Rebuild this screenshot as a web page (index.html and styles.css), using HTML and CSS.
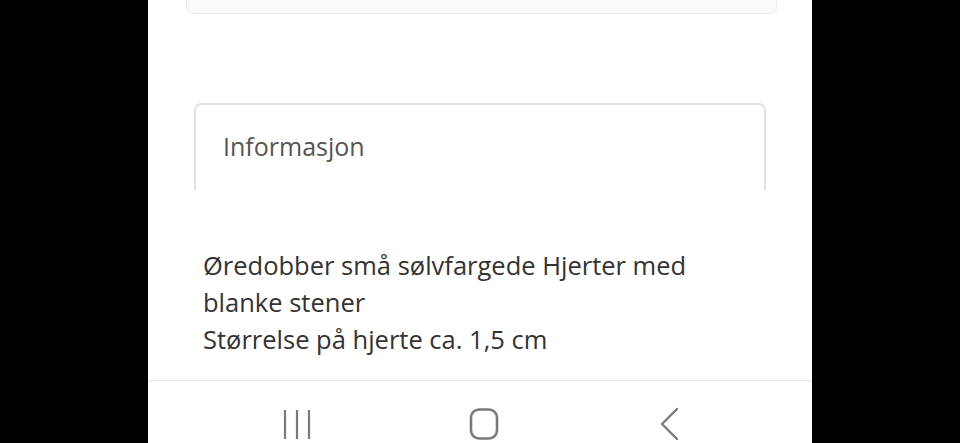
FILE: index.html
```html
<!DOCTYPE html>
<html lang="no">

<head>
    <meta charset="UTF-8">
    <title>Øredobber små sølvfargede Hjerter</title>
    <link rel="stylesheet" href="styles.css">
</head>

<body>
    <div class="phone">
        <div class="prevCard"></div>
        <div class="infoBox">
            <h2 class="infoTitle">Informasjon</h2>
        </div>
        <p class="description">Øredobber små sølvfargede Hjerter med blanke stener<br>Størrelse på hjerte ca. 1,5 cm</p>
        <div class="navBar">
            <svg class="navIcon" width="30" height="32" viewBox="0 0 30 32">
                <path d="M3 2v29M15 2v29M27 2v29" stroke="#7a7a7a" stroke-width="2.2" fill="none"/>
            </svg>
            <svg class="navIcon" width="32" height="34" viewBox="0 0 32 34">
                <rect x="3" y="2.5" width="26" height="29" rx="8" stroke="#7a7a7a" stroke-width="2.6" fill="none"/>
            </svg>
            <svg class="navIcon" width="24" height="34" viewBox="0 0 24 34">
                <path d="M21 2L6 17l15 15" stroke="#7a7a7a" stroke-width="2.4" fill="none" stroke-linecap="round" stroke-linejoin="round"/>
            </svg>
        </div>
    </div>
</body>

</html>
```

FILE: styles.css
```css
html, body { margin: 0; padding: 0; height: 100%; }
body { background-color: #000; font-family: "Open Sans", Arial, sans-serif; overflow: hidden; }
.phone { width: 664px; height: 100vh; margin: 0 auto; background-color: #fff; display: flex; flex-direction: column; }
.prevCard {
    height: 13px;
    margin: 0 35px 0 38px;
    background-color: #fafafa;
    border: 1px solid #ececec;
    border-top: none;
    border-radius: 0 0 7px 7px;
}
.infoBox {
    height: 87px;
    margin: 89px 46px 0 46px;
    border: 2px solid #e2e2e2;
    border-bottom: none;
    border-radius: 7px 7px 0 0;
    box-sizing: border-box;
}
.infoTitle { margin: 0; padding: 24px 0 0 27px; font-size: 25px; font-weight: 400; color: #555; }
.description {
    width: 530px;
    margin: 57px 0 0 55px;
    font-size: 25.5px;
    line-height: 37px;
    color: #333;
}
.navBar {
    margin-top: auto;
    height: 63px;
    border-top: 1px solid #e6e6e6;
    display: flex;
    justify-content: space-between;
    align-items: center;
    padding: 24px 132px 0 134px;
    box-sizing: border-box;
}
```
